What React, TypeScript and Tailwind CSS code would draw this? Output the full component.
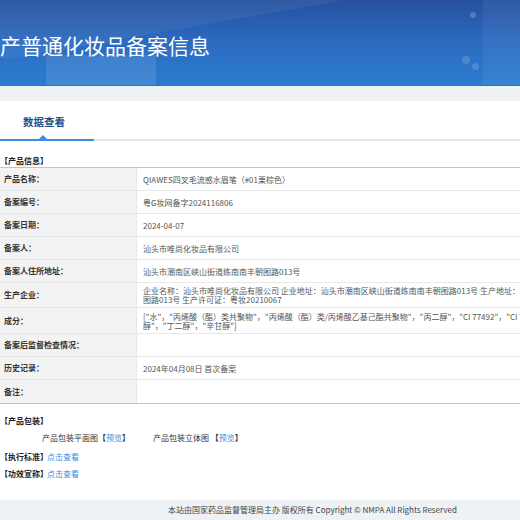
import React from 'react';

const rows: { label: string; lines: string[]; h: string }[] = [
  { label: '产品名称：', lines: ['QIAWES四叉毛流感水眉笔（#01栗棕色）'], h: 'h-[23px]' },
  { label: '备案编号：', lines: ['粤G妆网备字2024116806'], h: 'h-[23px]' },
  { label: '备案日期：', lines: ['2024-04-07'], h: 'h-[23px]' },
  { label: '备案人：', lines: ['汕头市唯尚化妆品有限公司'], h: 'h-[23px]' },
  { label: '备案人住所地址：', lines: ['汕头市潮南区峡山街道练南南丰朝图路013号'], h: 'h-[23px]' },
  {
    label: '生产企业：',
    lines: [
      '企业名称：汕头市唯尚化妆品有限公司 企业地址：汕头市潮南区峡山街道练南南丰朝图路013号 生产地址：汕头市潮南区峡山街道练南南丰朝',
      '图路013号 生产许可证：粤妆20210067',
    ],
    h: 'h-[25px]',
  },
  {
    label: '成分：',
    lines: [
      '["水"，"丙烯酸（酯）类共聚物"，"丙烯酸（酯）类/丙烯酸乙基己酯共聚物"，"丙二醇"，"CI 77492"，"CI 77491"，"CI 77499"，"苯氧乙',
      '醇"，"丁二醇"，"辛甘醇"]',
    ],
    h: 'h-[26px]',
  },
  { label: '备案后监督检查情况：', lines: [], h: 'h-[23px]' },
  { label: '历史记录：', lines: ['2024年04月08日 首次备案'], h: 'h-[23px]' },
  { label: '备注：', lines: [], h: 'h-[23px]' },
];

export default function App() {
  return (
    <div
      className="w-[520px] h-[520px] overflow-hidden bg-white text-[#333]"
      style={{ fontFamily: '"Noto Sans CJK SC", "Liberation Sans", sans-serif' }}
    >
      {/* banner */}
      <div className="relative h-[86px] overflow-hidden border-b border-[#2a74c8] bg-gradient-to-b from-[#2651a0] via-[#2b6bc0] to-[#2b7dcf]">
        <div className="absolute -left-[40px] top-[-60px] w-[420px] h-[90px] rotate-[-10deg] bg-white/5 rounded-full" />
        <div className="absolute left-[46px] top-[55px] w-[110px] h-[32px] bg-white/10" />
        <div className="absolute left-[470px] top-[12px] w-[6px] h-[6px] rounded-full bg-white/20" />
        <div className="absolute left-[462px] top-[56px] w-[8px] h-[8px] rounded-full bg-white/15" />
        <div className="absolute left-[472px] top-[63px] w-[7px] h-[7px] rounded-full bg-white/15" />
        <div className="absolute left-[483px] top-[0px] w-[60px] h-[86px] bg-white/5" />
        <div className="relative pt-[35px] text-[21px] leading-none text-white whitespace-nowrap">
          产普通化妆品备案信息
        </div>
      </div>

      {/* gray band */}
      <div className="h-[15px] bg-[#eef2f5]" />

      {/* tab */}
      <div className="h-[38px] pt-[16px]">
        <div className="pl-[23px] text-[10.5px] leading-none font-bold text-[#1e4f8c]">数据查看</div>
      </div>
      <div className="relative flex h-[2px]">
        <div className="w-[94px] bg-[#3b8fe0]" />
        <div className="flex-1 bg-[#e6e6e6]" />
        <div className="absolute left-[39px] -top-[4px] w-0 h-0 border-l-[4px] border-r-[4px] border-b-[4px] border-l-transparent border-r-transparent border-b-[#3b8fe0]" />
      </div>

      {/* product info */}
      <div className="h-[26px] pt-[16px] text-[8px] leading-none font-bold text-[#222]">【产品信息】</div>
      <div className="w-[760px] border-t border-b border-[#afc7e6]">
        {rows.map((r, i) => (
          <div
            key={i}
            className={`grid grid-cols-[137px_1fr] ${r.h} ${i < rows.length - 1 ? 'border-b border-[#e8e8e8]' : ''}`}
          >
            <div className="flex items-center pl-[4px] bg-[#f3f3f3] border-r border-[#e8e8e8] text-[8px] font-bold text-[#333]">
              {r.label}
            </div>
            <div className="flex flex-col justify-center pl-[6px] text-[8px] leading-[9px] text-[#555] whitespace-nowrap">
              {r.lines.map((l, j) => (
                <div key={j}>{l}</div>
              ))}
            </div>
          </div>
        ))}
      </div>

      {/* packaging */}
      <div className="pt-[13px] text-[8px] leading-none font-bold text-[#222]">【产品包装】</div>
      <div className="flex pt-[9px] text-[8px] leading-none text-[#333]">
        <div className="pl-[42px] w-[153px]">
          产品包装平面图<span className="font-bold">【</span><span className="text-[#3a8ee6]">预览</span><span className="font-bold">】</span>
        </div>
        <div>
          产品包装立体图 <span className="font-bold">【</span><span className="text-[#3a8ee6]">预览</span><span className="font-bold">】</span>
        </div>
      </div>
      <div className="flex pt-[11px] text-[8px] leading-none">
        <span className="font-bold text-[#222] w-[47px]">【执行标准】</span>
        <span className="text-[#3a8ee6]">点击查看</span>
      </div>
      <div className="flex pt-[9px] text-[8px] leading-none">
        <span className="font-bold text-[#222] w-[47px]">【功效宣称】</span>
        <span className="text-[#3a8ee6]">点击查看</span>
      </div>

      {/* footer */}
      <div className="mt-[22px] h-[20px] bg-[#eef2f5] flex items-center pl-[168px] text-[8px] text-[#444] whitespace-nowrap">
        本站由国家药品监督管理局主办 版权所有 Copyright © NMPA All Rights Reserved
      </div>
    </div>
  );
}
